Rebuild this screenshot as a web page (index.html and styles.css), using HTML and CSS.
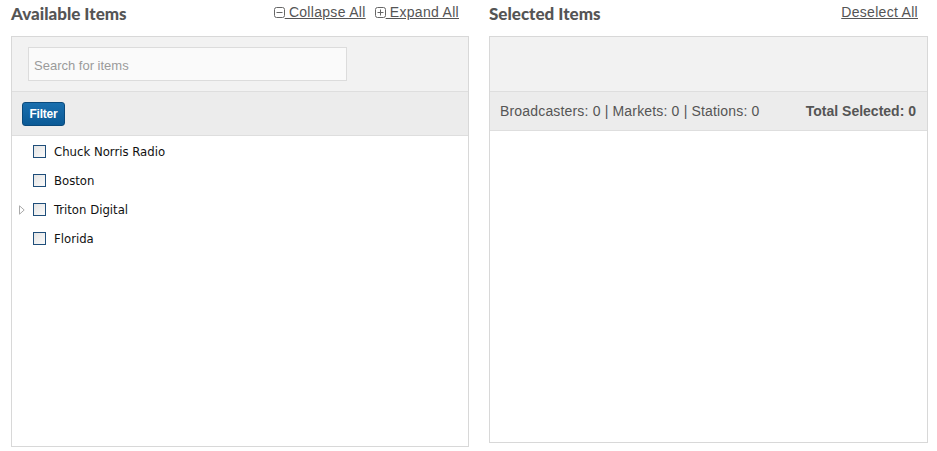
FILE: index.html
```html
<!DOCTYPE html>
<html>
<head>
<meta charset="utf-8">
<link rel="stylesheet" href="styles.css">
</head>
<body>
<div class="page">
  <section class="col col-left">
    <div class="col-head">
      <h2 class="title">Available Items</h2>
      <div class="links">
        <a class="link" href="#"><svg class="sq" width="11" height="11" viewBox="0 0 11 11"><rect x="0.5" y="0.5" width="10" height="10" rx="2" fill="none" stroke="#666"/><path d="M2.5 5.5h6" stroke="#666"/></svg> Collapse All</a>
        <a class="link" href="#"><svg class="sq" width="11" height="11" viewBox="0 0 11 11"><rect x="0.5" y="0.5" width="10" height="10" rx="2" fill="none" stroke="#666"/><path d="M2.5 5.5h6M5.5 2.5v6" stroke="#666"/></svg> Expand All</a>
      </div>
    </div>
    <div class="box box-left">
      <div class="search-area">
        <div class="search">Search for items</div>
      </div>
      <div class="filter-row">
        <button class="btn">Filter</button>
      </div>
      <ul class="tree">
        <li class="node"><span class="tog"></span><span class="cb"></span><span class="lbl">Chuck Norris Radio</span></li>
        <li class="node"><span class="tog"></span><span class="cb"></span><span class="lbl">Boston</span></li>
        <li class="node"><span class="tog"><svg width="6" height="10" viewBox="0 0 6 10"><path d="M0.5 0.8L5.2 5L0.5 9.2Z" fill="#fff" stroke="#aaa"/></svg></span><span class="cb"></span><span class="lbl">Triton Digital</span></li>
        <li class="node"><span class="tog"></span><span class="cb"></span><span class="lbl">Florida</span></li>
      </ul>
    </div>
  </section>
  <section class="col col-right">
    <div class="col-head">
      <h2 class="title">Selected Items</h2>
      <div class="links">
        <a class="link" href="#">Deselect All</a>
      </div>
    </div>
    <div class="box box-right">
      <div class="search-area"></div>
      <div class="stats">
        <span>Broadcasters: 0 | Markets: 0 | Stations: 0</span>
        <span class="total">Total Selected: 0</span>
      </div>
    </div>
  </section>
</div>
</body>
</html>
```
FILE: styles.css
```css
* { box-sizing: border-box; }
html, body { margin: 0; padding: 0; background: #fff; }
body { font-family: "Liberation Sans", Arial, sans-serif; color: #555; }
.page {
  display: flex;
  gap: 20px;
  padding: 0 0 0 11px;
}
.col-left { width: 458px; }
.col-right { width: 439px; }
.col-head {
  display: flex;
  justify-content: space-between;
  align-items: flex-start;
  height: 36px;
  padding-right: 10px;
}
.title {
  margin: 4px 0 0 0;
  font-family: "Lato", sans-serif;
  font-weight: 900;
  font-size: 17px;
  line-height: 19px;
  color: #555;
}
.links {
  display: flex;
  gap: 9px;
  margin-top: 3px;
}
.link {
  font-size: 14px;
  line-height: 18px;
  color: #555;
  text-decoration: underline;
  letter-spacing: 0.3px;
}
.sq { vertical-align: -1px; }
.box {
  border: 1px solid #d8d8d8;
  background: #fff;
}
.box-left { height: 411px; }
.box-right { height: 407px; }
.search-area {
  height: 55px;
  background: #f2f2f2;
  border-bottom: 1px solid #dedede;
  padding: 10px 16px;
}
.search {
  width: 319px;
  height: 34px;
  border: 1px solid #dcdcdc;
  background: #fafafa;
  color: #9a9a9a;
  font-size: 13px;
  line-height: 32px;
  padding: 2px 0 0 5px;
}
.filter-row {
  height: 44px;
  background: #ececec;
  border-bottom: 1px solid #dedede;
  padding: 10px 10px;
}
.btn {
  display: block;
  width: 43px;
  height: 24px;
  border: 1px solid #0a4a7c;
  border-radius: 3px;
  background: linear-gradient(#1a6fae, #0b5a96);
  color: #fff;
  font-family: "Liberation Sans", Arial, sans-serif;
  font-weight: 700;
  font-size: 12px;
  padding: 0;
  letter-spacing: -0.2px;
}
.tree {
  list-style: none;
  margin: 0;
  padding: 1px 0 0 0;
}
.node {
  display: flex;
  align-items: center;
  height: 29px;
  font-family: "DejaVu Sans Condensed", "DejaVu Sans", sans-serif;
  font-size: 13px;
  color: #111;
}
.tog {
  width: 21px;
  padding-left: 7px;
  display: flex;
  align-items: center;
}
.cb {
  width: 13px;
  height: 13px;
  border: 1px solid #1f4e7a;
  background: linear-gradient(135deg, #e4e4e4, #fafafa);
  margin-right: 8px;
}
.lbl { line-height: 16px; }
.stats {
  display: flex;
  justify-content: space-between;
  align-items: center;
  height: 39px;
  background: #ececec;
  border-bottom: 1px solid #dedede;
  padding: 0 11px 0 10px;
  font-size: 14px;
  color: #555;
  letter-spacing: 0.17px;
}
.total { font-weight: 700; letter-spacing: 0; }
```
